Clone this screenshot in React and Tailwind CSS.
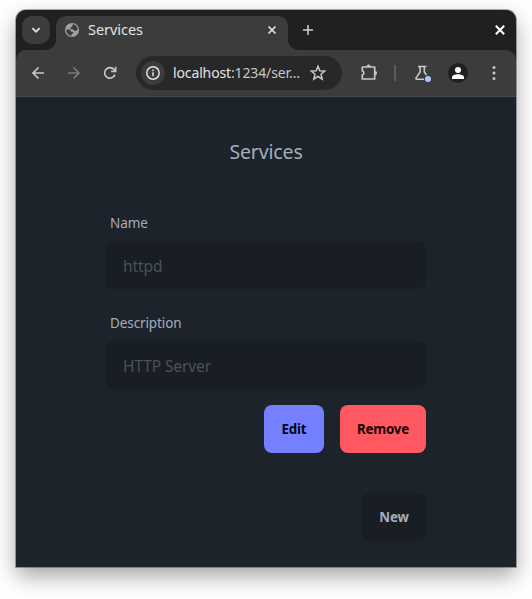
import React from 'react';

function Icon({ className = '', box = '0 0 24 24', children }) {
  return (
    <svg viewBox={box} className={`block shrink-0 ${className}`} fill="none" stroke="currentColor">
      {children}
    </svg>
  );
}

function TabBar() {
  return (
    <div className="flex h-10 bg-[#1f2120]">
      <button className="mt-1.5 ml-1.5 flex size-7 items-center justify-center rounded-[10px] bg-[#3c3c3c] text-[#e3e3e3]">
        <Icon className="size-3" box="0 0 12 12">
          <path d="M2.4 4.2 6 7.8l3.6-3.6" strokeWidth="1.8" />
        </Icon>
      </button>
      <div className="relative mt-1.5 ml-1.5 w-[232px] rounded-t-[10px] bg-[#3c3c3c] pr-[11px] pl-2">
        <svg viewBox="0 0 10 10" className="absolute bottom-0 -left-[10px] size-[10px] fill-[#3c3c3c]"><path d="M10 0v10H0A10 10 0 0 0 10 0z" /></svg>
        <svg viewBox="0 0 10 10" className="absolute -right-[10px] bottom-0 size-[10px] fill-[#3c3c3c]"><path d="M0 0v10h10A10 10 0 0 1 0 0z" /></svg>
        <div className="flex h-7 items-center">
          <svg viewBox="0 0 16 16" className="size-4 shrink-0">
            <circle cx="8" cy="8" r="7.1" fill="#9aa0a6" />
            <path d="M9.2 2.3C11.5 2.7 13.6 4.9 13.8 7.6c-1 .3-1.5 1.6-2.9 1.5-1-.1-1-1.4-2-1.6-1-.3-2.6 0-2.7-1.2-.1-1 1.3-1 1.8-1.6.5-.6.3-1.7 1.2-2.4z" fill="#3c3c3c" />
            <path d="M2.2 7.6c1.6 0 3.2-.2 4 .5.8.6.5 1.5 1.3 1.7.9.2 1.7.2 1.7 1 0 1-1.5.9-1.6 1.7l-.1 1.2C4.5 13.5 2.2 11 2.2 7.6z" fill="#3c3c3c" />
          </svg>
          <span className="ml-2 flex-1 text-[14.5px] tracking-[-0.05px] text-[#e3e3e3]">Services</span>
          <Icon className="size-[10px] text-[#e3e3e3]" box="0 0 10 10">
            <path d="m1.5 1.5 7 7m0-7-7 7" strokeWidth="1.7" />
          </Icon>
        </div>
      </div>
      <Icon className="mt-[15px] ml-[15px] size-[10px] text-[#d0d0d0]" box="0 0 10 10">
        <path d="M5 0v10M0 5h10" strokeWidth="1.5" />
      </Icon>
      <Icon className="mt-[15px] mr-[11px] ml-auto size-[10px] text-white" box="0 0 10 10">
        <path d="m.8.8 8.4 8.4m0-8.4L.8 9.2" strokeWidth="2" />
      </Icon>
    </div>
  );
}

function Toolbar() {
  return (
    <div className="bg-[#1f2120]">
      <div className="flex h-[47px] items-center rounded-t-[10px] border-b border-[#4a4a4a] bg-[#3c3c3c] pl-3.5 text-[#c7c7c7]">
        <Icon className="size-4" box="0 0 16 16"><path d="M14 8H3m5.5-5.5L3 8l5.5 5.5" strokeWidth="1.7" /></Icon>
        <Icon className="ml-5 size-4 text-[#7a7a7a]" box="0 0 16 16"><path d="M2 8h11M7.5 2.5 13 8l-5.5 5.5" strokeWidth="1.7" /></Icon>
        <Icon className="ml-5 size-4" box="0 0 16 16">
          <path d="M12.9 9.6A5.3 5.3 0 1 1 12 4.5L13.6 6" strokeWidth="1.7" />
          <path d="M13.6 1.8v4.5H9.1" strokeWidth="1.7" />
        </Icon>
        <div className="ml-[18px] flex h-[34px] w-[206px] items-center rounded-full bg-[#282828] pl-[5px]">
          <span className="flex size-6 shrink-0 items-center justify-center rounded-full bg-[#3c3c3c] text-[#e3e3e3]">
            <Icon className="size-4" box="0 0 16 16">
              <circle cx="8" cy="8" r="6.2" strokeWidth="1.5" />
              <path d="M8 7.2v4M8 4.6v1.6" strokeWidth="1.5" />
            </Icon>
          </span>
          <span className="ml-2 w-[129px] text-sm tracking-[-0.13px] whitespace-nowrap text-[#c7c7c7]">
            <span className="text-[#e3e3e3]">localhost</span>:1234/ser…
          </span>
          <Icon className="ml-[7px] size-[18px]" box="0 0 18 18">
            <path d="m9 2.2 1.8 4.5 4.9.4-3.7 3.2 1.2 4.8L9 12.5l-4.2 2.6L6 10.3 2.3 7.1l4.9-.4z" strokeWidth="1.5" />
          </Icon>
        </div>
        <Icon className="ml-[17px] size-5" box="0 0 20 20">
          <path d="M3.3 4h12.4v12H3.3v-3.9a2.2 2.2 0 0 0 0-4.2z" strokeWidth="1.7" strokeLinejoin="round" />
          <path d="M7.5 3.7a2.1 2.1 0 0 1 4.2 0zM16 7.9a2.1 2.1 0 0 1 0 4.2z" fill="currentColor" stroke="none" />
        </Icon>
        <span className="ml-[15px] h-4 w-[2px] bg-[#5c5c5c]" />
        <div className="relative ml-[18px]">
          <Icon className="size-[18px]" box="0 0 18 18">
            <path d="M4 2.5h8.4M6.1 2.8v5.2L2.1 13.8q-.8 1.5.8 1.5h10.6q1.6 0 .8-1.5l-4-5.8V2.8" strokeWidth="1.6" />
          </Icon>
          <span className="absolute top-[12px] left-[11px] size-[6px] rounded-full bg-[#a8c7fa] ring-1 ring-[#3c3c3c]" />
        </div>
        <span className="ml-4 flex size-5 items-center justify-center rounded-full bg-[#1f2120]">
          <svg viewBox="0 0 12 12" className="size-3 fill-white"><circle cx="6" cy="3" r="3" /><path d="M0 12v-1.8C0 8.4 3 7.3 6 7.3s6 1.1 6 2.9V12z" /></svg>
        </span>
        <Icon className="ml-[18px] size-4" box="0 0 16 16">
          <path d="M8 2.6h.01M8 8h.01M8 13.4h.01" strokeWidth="3" strokeLinecap="round" />
        </Icon>
      </div>
    </div>
  );
}

function Field({ label, placeholder }) {
  return (
    <label className="block">
      <span className="flex h-9 items-center px-1 text-[13.5px] tracking-[-0.1px]">{label}</span>
      <input placeholder={placeholder} className="block h-12 w-full rounded-lg bg-[#191e24] px-[17px] pt-px text-[15.5px] tracking-[-0.1px] placeholder:text-[#4b5158]" />
    </label>
  );
}

export default function App() {
  return (
    <div className="h-[599px] w-[532px] overflow-hidden bg-white px-4 pt-2.5 font-['Noto_Sans',sans-serif]">
      <div className="h-[557px] rounded-t-[10px] shadow-[0_0_0_1px_rgba(0,0,0,0.3),0_9px_22px_rgba(0,0,0,0.36)]">
        <div className="flex h-full flex-col overflow-hidden rounded-t-[10px] bg-[#1d232a]">
          <TabBar />
          <Toolbar />
          <main className="mx-auto w-80 pt-10 text-[#a6adbb]">
            <h1 className="text-center text-[19.5px] leading-[30px] tracking-[-0.15px]">Services</h1>
            <form className="mt-[38px] flex flex-col gap-4">
              <Field label="Name" placeholder="httpd" />
              <Field label="Description" placeholder="HTTP Server" />
              <div className="flex justify-end gap-4 text-[13.3px] font-bold tracking-[-0.2px]">
                <button type="button" className="h-12 w-[60px] rounded-lg bg-[#7480ff] pt-0.5 text-[#050617]">Edit</button>
                <button type="button" className="h-12 w-[86px] rounded-lg bg-[#ff5861] pt-0.5 text-[#160202]">Remove</button>
              </div>
            </form>
            <div className="mt-10 flex justify-end">
              <button className="h-12 w-16 rounded-lg bg-[#191e24] pt-0.5 text-[13.3px] font-bold tracking-[-0.1px]">New</button>
            </div>
          </main>
        </div>
      </div>
    </div>
  );
}
